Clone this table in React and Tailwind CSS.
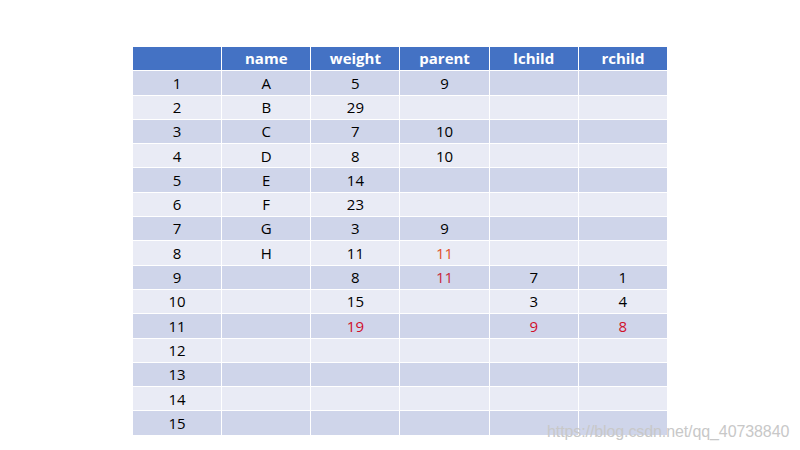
import React from 'react';

const cols = ['', 'name', 'weight', 'parent', 'lchild', 'rchild'];

const rows = [
  ['1', 'A', '5', '9', '', ''],
  ['2', 'B', '29', '', '', ''],
  ['3', 'C', '7', '10', '', ''],
  ['4', 'D', '8', '10', '', ''],
  ['5', 'E', '14', '', '', ''],
  ['6', 'F', '23', '', '', ''],
  ['7', 'G', '3', '9', '', ''],
  ['8', 'H', '11', '11', '', ''],
  ['9', '', '8', '11', '7', '1'],
  ['10', '', '15', '', '3', '4'],
  ['11', '', '19', '', '9', '8'],
  ['12', '', '', '', '', ''],
  ['13', '', '', '', '', ''],
  ['14', '', '', '', '', ''],
  ['15', '', '', '', '', ''],
];

// cells drawn in red in the slide
const red = {
  '7-3': 'text-[#e0502a]',
  '8-3': 'text-[#c8283c]',
  '10-2': 'text-[#d0102a]',
  '10-4': 'text-[#d0102a]',
  '10-5': 'text-[#d0102a]',
};

export default function App() {
  return (
    <div className="relative w-[800px] h-[450px] bg-white font-['Open_Sans','Noto_Sans',sans-serif]">
      <div className="pl-[133px] pt-[47px]">
        <div className="w-[534px] grid grid-cols-6 gap-px bg-white">
          {cols.map((c, i) => (
            <div key={i} className="h-[23.3px] bg-[#4472c4] text-white font-bold text-[15px] flex items-center justify-center">
              {c}
            </div>
          ))}
          {rows.map((r, ri) =>
            r.map((v, ci) => (
              <div
                key={ri + '-' + ci}
                className={
                  'h-[23.3px] flex items-center justify-center text-[15px] ' +
                  (ri % 2 === 0 ? 'bg-[#cfd5ea] ' : 'bg-[#e9ebf5] ') +
                  (red[ri + '-' + ci] || 'text-black')
                }
              >
                {v}
              </div>
            ))
          )}
        </div>
      </div>
      <div className="absolute left-[547px] top-[420px] text-[16px] text-[#c8c8c8] font-['Liberation_Sans',sans-serif] tracking-[-0.1px]">
        https://blog.csdn.net/qq_40738840
      </div>
    </div>
  );
}
